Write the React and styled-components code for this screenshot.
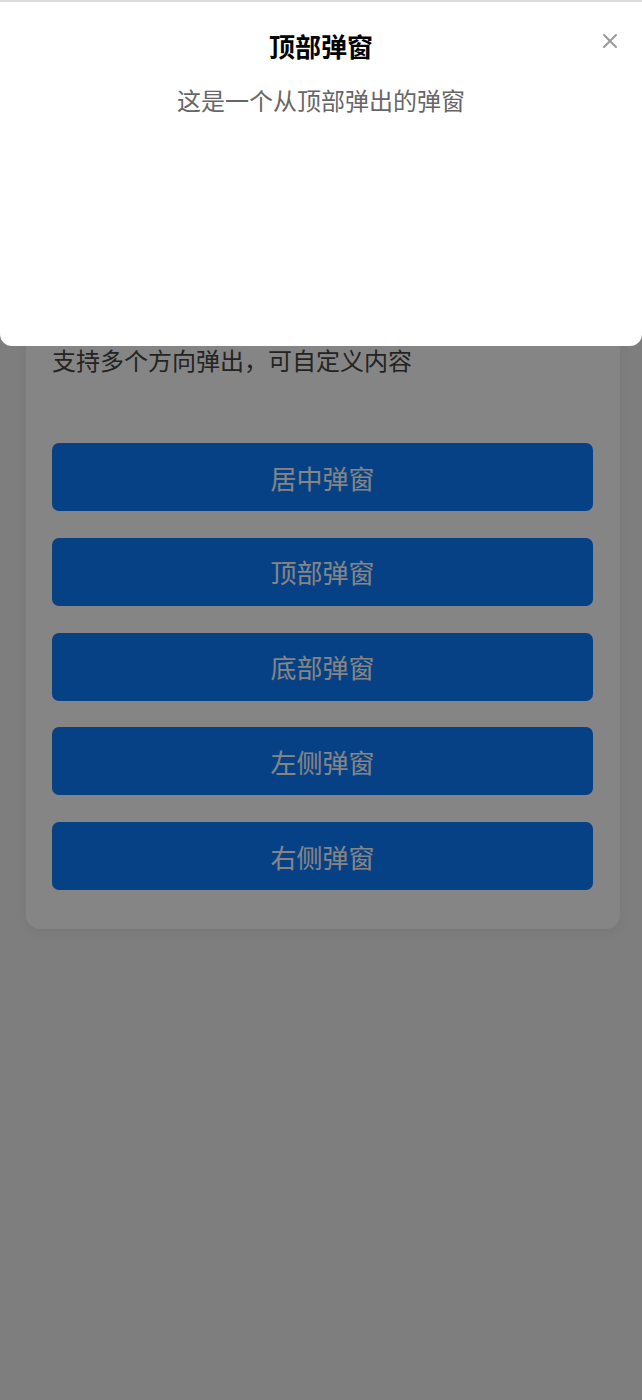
import React from 'react'
import styled, { createGlobalStyle } from 'styled-components'

const GlobalStyle = createGlobalStyle`
  html, body {
    margin: 0;
    padding: 0;
    background: #f2f2f2;
    font-family: "Noto Sans CJK SC", "Noto Sans", sans-serif;
  }
`

const buttons = ['居中弹窗', '顶部弹窗', '底部弹窗', '左侧弹窗', '右侧弹窗']

const App = () => {
  return (
    <>
      <GlobalStyle />
      <Page>
        <Card>
          <CardTitle>弹出层 Popup</CardTitle>
          <Desc>支持多个方向弹出，可自定义内容</Desc>
          <ButtonList>
            {buttons.map(label => (
              <Button key={label}>{label}</Button>
            ))}
          </ButtonList>
        </Card>
      </Page>
      <Overlay />
      <TopPopup>
        <PopupTitle>顶部弹窗</PopupTitle>
        <PopupText>这是一个从顶部弹出的弹窗</PopupText>
        <Close aria-label="关闭">
          <svg width="16" height="16" viewBox="0 0 16 16">
            <path d="M2 2L14 14M14 2L2 14" stroke="#999" strokeWidth="2" strokeLinecap="round" />
          </svg>
        </Close>
      </TopPopup>
    </>
  )
}

export default App

const Page = styled.div`
  min-height: 1400px;
  box-sizing: border-box;
  padding: 236px 22px 26px 26px;
`

const Card = styled.div`
  background: #fff;
  border-radius: 14px;
  padding: 24px 27px 39px 26px;
  box-shadow: 0 4px 14px rgba(0, 0, 0, 0.06);
`

const CardTitle = styled.h3`
  margin: 0;
  font-size: 28px;
  line-height: 40px;
  color: #222;
`

const Desc = styled.p`
  margin: 42px 0 65px;
  font-size: 24px;
  line-height: 36px;
  color: #444;
`

const ButtonList = styled.div`
  display: flex;
  flex-direction: column;
  gap: 26.75px;
`

const Button = styled.button`
  height: 68px;
  border: none;
  border-radius: 7px;
  background: #0f7dff;
  color: #fff;
  font-family: inherit;
  font-size: 26px;
  cursor: pointer;
`

const Overlay = styled.div`
  position: fixed;
  inset: 0;
  background: rgba(0, 0, 0, 0.48);
`

const TopPopup = styled.div`
  position: fixed;
  top: 0;
  left: 0;
  right: 0;
  height: 346px;
  box-sizing: border-box;
  background: #fff;
  border-top: 2px solid #dcdcdc;
  border-radius: 0 0 12px 12px;
  display: flex;
  flex-direction: column;
  align-items: center;
  padding-top: 26px;
`

const PopupTitle = styled.div`
  font-size: 26px;
  font-weight: 700;
  line-height: 36px;
  color: #000;
`

const PopupText = styled.div`
  margin-top: 18px;
  font-size: 24px;
  line-height: 36px;
  color: #666;
`

const Close = styled.button`
  position: absolute;
  top: 29px;
  right: 22px;
  width: 20px;
  height: 20px;
  padding: 2px;
  border: none;
  background: none;
  cursor: pointer;
  display: flex;
`
